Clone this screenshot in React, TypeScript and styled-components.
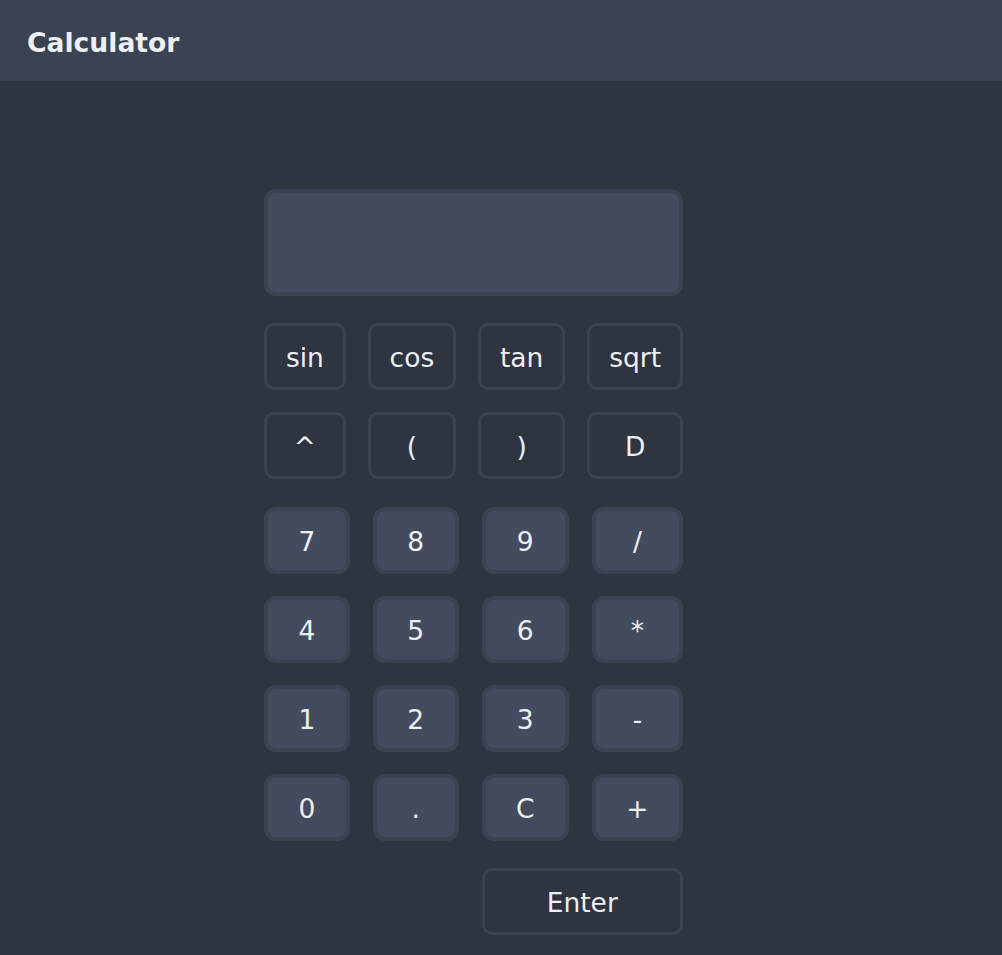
import React from "react";
import styled, { createGlobalStyle } from "styled-components";

const GlobalStyle = createGlobalStyle`
  html, body {
    margin: 0;
    padding: 0;
    background: #2e3440;
    font-family: "DejaVu Sans", "Noto Sans", sans-serif;
    color: #eceff4;
  }
  #root {
    min-height: 100vh;
    background: #2e3440;
  }
`;

const Page = styled.div`
  display: flex;
  flex-direction: column;
  min-height: 100vh;
`;

const Header = styled.header`
  height: 81px;
  background: #3b4252;
  display: flex;
  align-items: center;
  padding: 3px 0 0 27px;
  box-sizing: border-box;
`;

const Title = styled.h1`
  margin: 0;
  font-size: 26.6px;
  font-weight: bold;
  color: #eceff4;
`;

const Main = styled.main`
  padding: 108px 0 0 264px;
`;

const Calculator = styled.div`
  width: 419px;
  display: flex;
  flex-direction: column;
`;

const Display = styled.div`
  height: 107px;
  box-sizing: border-box;
  background: #434c5e;
  border: 4px solid #3b4252;
  border-radius: 12px;
  margin-bottom: 27px;
`;

const Keypad = styled.div<{ $colGap: number }>`
  display: grid;
  grid-template-columns: repeat(4, auto);
  column-gap: ${(p) => p.$colGap}px;
  row-gap: 22px;
  & + & {
    margin-top: 28px;
  }
`;

const Key = styled.button<{ $filled?: boolean; $span?: number; $gapAbove?: number }>`
  height: 67px;
  box-sizing: border-box;
  font-family: inherit;
  font-size: 26.5px;
  line-height: 30px;
  color: #eceff4;
  background: ${(p) => (p.$filled ? "#434c5e" : "transparent")};
  border: ${(p) => (p.$filled ? 4 : 3)}px solid #3b4252;
  border-radius: ${(p) => (p.$filled ? 12 : 10)}px;
  padding: 3px 18px 0;
  display: flex;
  align-items: center;
  justify-content: center;
  cursor: pointer;
  ${(p) => (p.$span ? `grid-column: ${5 - p.$span} / span ${p.$span};` : "")}
  ${(p) => (p.$gapAbove ? `margin-top: ${p.$gapAbove}px;` : "")}
`;

const funcKeys = ["sin", "cos", "tan", "sqrt", "^", "(", ")", "D"];
const numKeys = ["7", "8", "9", "/", "4", "5", "6", "*", "1", "2", "3", "-", "0", ".", "C", "+"];

export default function App() {
  return (
    <>
      <GlobalStyle />
      <Page>
        <Header>
          <Title>Calculator</Title>
        </Header>
        <Main>
          <Calculator>
            <Display />
            <Keypad $colGap={22}>
              {funcKeys.map((k) => (
                <Key key={k}>{k}</Key>
              ))}
            </Keypad>
            <Keypad $colGap={23}>
              {numKeys.map((k) => (
                <Key key={k} $filled>
                  {k}
                </Key>
              ))}
              <Key $span={2} $gapAbove={5}>
                Enter
              </Key>
            </Keypad>
          </Calculator>
        </Main>
      </Page>
    </>
  );
}
